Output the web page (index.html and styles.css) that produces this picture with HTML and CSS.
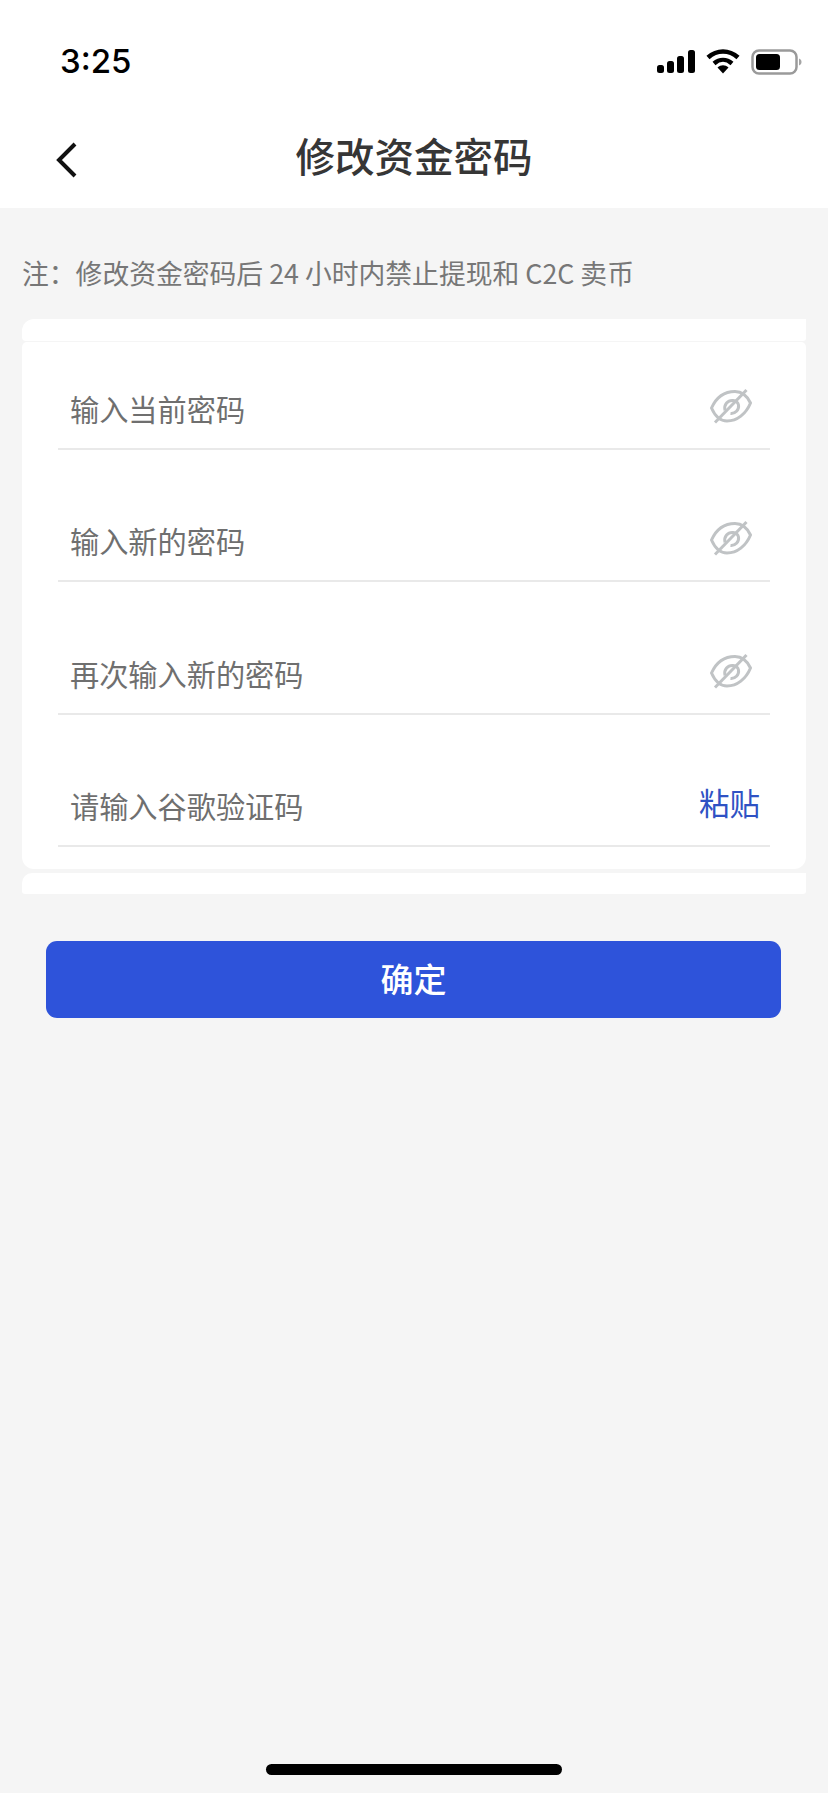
FILE: index.html
```html
<!DOCTYPE html>
<html lang="zh-CN">
<head>
<meta charset="utf-8">
<title>修改资金密码</title>
<link rel="stylesheet" href="styles.css">
</head>
<body>
<div class="page">
  <div class="top">
    <div class="status">
      <span class="time">3:25</span>
      <div class="status-icons">
        <svg class="signal" width="38" height="24" viewBox="0 0 38 24"><rect x="0" y="15" width="7" height="8" rx="2.5"/><rect x="10" y="11" width="7" height="12" rx="2.5"/><rect x="20" y="6" width="7" height="17" rx="2.5"/><rect x="31" y="0" width="7" height="23" rx="2.5"/></svg>
        <svg class="wifi" width="34" height="26" viewBox="0 0 34 26"><path d="M2 8.500C11 .5 23 .5 32 8.500" fill="none" stroke="#000" stroke-width="4.600"/><path d="M8 14.500C13.500 9.700 20.500 9.700 26 14.500" fill="none" stroke="#000" stroke-width="4.400"/><path d="M11.500 18.600C15 15.600 19 15.600 22.500 18.600L17 24.500Z"/></svg>
        <svg class="battery" width="52" height="26" viewBox="0 0 52 26"><rect x="1.500" y="1.500" width="44" height="23" rx="6.500" fill="none" stroke="#9a9a9a" stroke-width="2.500"/><rect x="5" y="5" width="24" height="16" rx="3.500"/><path d="M48 9.500c2 .8 2.500 2 2.500 3.500s-.5 2.700-2.500 3.500z" fill="#a5a5a5"/></svg>
      </div>
    </div>
    <div class="nav">
      <svg class="back" width="24" height="38" viewBox="0 0 24 38"><path d="M20 3 4 19l16 16" fill="none" stroke="#111" stroke-width="4"/></svg>
      <h1 class="title">修改资金密码</h1>
    </div>
  </div>

  <p class="note">注：修改资金密码后 24 小时内禁止提现和 C2C 卖币</p>

  <div class="strip strip-top"></div>
  <div class="card">
    <div class="row">
      <span class="label">输入当前密码</span>
      <svg class="eye" width="44" height="38" viewBox="0 0 44 38"><g fill="none" stroke="#c0c3c5" stroke-width="3"><path d="M2.500 20C7 10 15 3.500 26 3.500c7 0 12 4 15.500 11.500C37 26 28 33 18 33 11 33 6 28 2.500 20Z"/><path d="M16 22.500c-1.500-6 3-10.500 8-10 3 .3 5 2 5.500 4.500.8 5-3.500 9-8 8.500"/><path d="M37.500 2 6 34.500"/></g></svg>
    </div>
    <div class="row">
      <span class="label">输入新的密码</span>
      <svg class="eye" width="44" height="38" viewBox="0 0 44 38"><g fill="none" stroke="#c0c3c5" stroke-width="3"><path d="M2.500 20C7 10 15 3.500 26 3.500c7 0 12 4 15.500 11.500C37 26 28 33 18 33 11 33 6 28 2.500 20Z"/><path d="M16 22.500c-1.500-6 3-10.500 8-10 3 .3 5 2 5.500 4.500.8 5-3.500 9-8 8.500"/><path d="M37.500 2 6 34.500"/></g></svg>
    </div>
    <div class="row">
      <span class="label">再次输入新的密码</span>
      <svg class="eye" width="44" height="38" viewBox="0 0 44 38"><g fill="none" stroke="#c0c3c5" stroke-width="3"><path d="M2.500 20C7 10 15 3.500 26 3.500c7 0 12 4 15.500 11.500C37 26 28 33 18 33 11 33 6 28 2.500 20Z"/><path d="M16 22.500c-1.500-6 3-10.500 8-10 3 .3 5 2 5.500 4.500.8 5-3.500 9-8 8.500"/><path d="M37.500 2 6 34.500"/></g></svg>
    </div>
    <div class="row">
      <span class="label">请输入谷歌验证码</span>
      <span class="paste">粘贴</span>
    </div>
  </div>
  <div class="strip strip-bottom"></div>

  <button class="confirm" type="button">确定</button>

  <div class="spacer"></div>
  <div class="home-wrap"><div class="home"></div></div>
</div>
</body>
</html>
```

FILE: styles.css
```css
* { box-sizing: border-box; }
html, body { margin: 0; padding: 0; }
body {
  background: #f5f5f5;
  font-family: "Noto Sans CJK SC", "Liberation Sans", sans-serif;
  color: #6a6a6a;
}
.page {
  width: 828px;
  height: 1793px;
  display: flex;
  flex-direction: column;
  overflow: hidden;
}
.top { background: #fff; height: 208px; display: flex; flex-direction: column; }
.status {
  height: 100px;
  padding: 41px 25px 0 60px;
  display: flex;
  justify-content: space-between;
  align-items: flex-start;
}
.time {
  font-family: Inter, "Liberation Sans", sans-serif;
  font-size: 33px;
  line-height: 40px;
  font-weight: 500;
  color: #000;
}
.status-icons { display: flex; align-items: center; gap: 11px; padding-top: 8px; }
.nav {
  height: 108px;
  position: relative;
  display: flex;
  align-items: center;
  justify-content: center;
  padding-top: 2px;
}
.back { position: absolute; left: 55px; top: 41px; }
.title {
  margin: 0;
  font-size: 39.5px;
  line-height: 50px;
  font-weight: 500;
  color: #363636;
}
.note {
  margin: 0;
  padding: 18px 0 0 22px;
  height: 111px;
  display: flex;
  align-items: center;
  font-size: 26.8px;
  line-height: 36px;
  color: #777;
  white-space: pre;
}
.strip { margin: 0 22px; background: #fff; height: 22px; }
.strip-top { border-radius: 12px 0 3px 4px; }
.strip-bottom { margin-top: 4px; height: 21px; border-radius: 10px 0 3px 3px; }
.card {
  margin: 1px 22px 0;
  background: #fff;
  border-radius: 5px 5px 12px 12px;
  padding: 0 36px;
  height: 527px;
}
.row {
  height: 132.67px;
  padding: 0 10px 0 12px;
  display: flex;
  justify-content: space-between;
  align-items: flex-end;
  border-bottom: 2px solid #e9e9e9;
}
.row:first-child { height: 107.5px; }
.label {
  font-size: 29.2px;
  line-height: 40px;
  color: #6f6f6f;
  padding-bottom: 20px;
}
.eye { margin-bottom: 22px; margin-right: 7px; }
.paste {
  font-size: 30.5px;
  line-height: 40px;
  color: #2f52c4;
  padding-bottom: 23px;
}
.confirm {
  margin: 47px 47px 0 46px;
  height: 77px;
  border: 0;
  border-radius: 11px;
  background: #2e53da;
  color: #fff;
  font-family: inherit;
  font-size: 33px;
  font-weight: 500;
  padding: 0 0 3px;
}
.spacer { flex: 1; }
.home-wrap { height: 29px; display: flex; justify-content: center; }
.home { width: 296px; height: 11px; border-radius: 6px; background: #000; }
```
